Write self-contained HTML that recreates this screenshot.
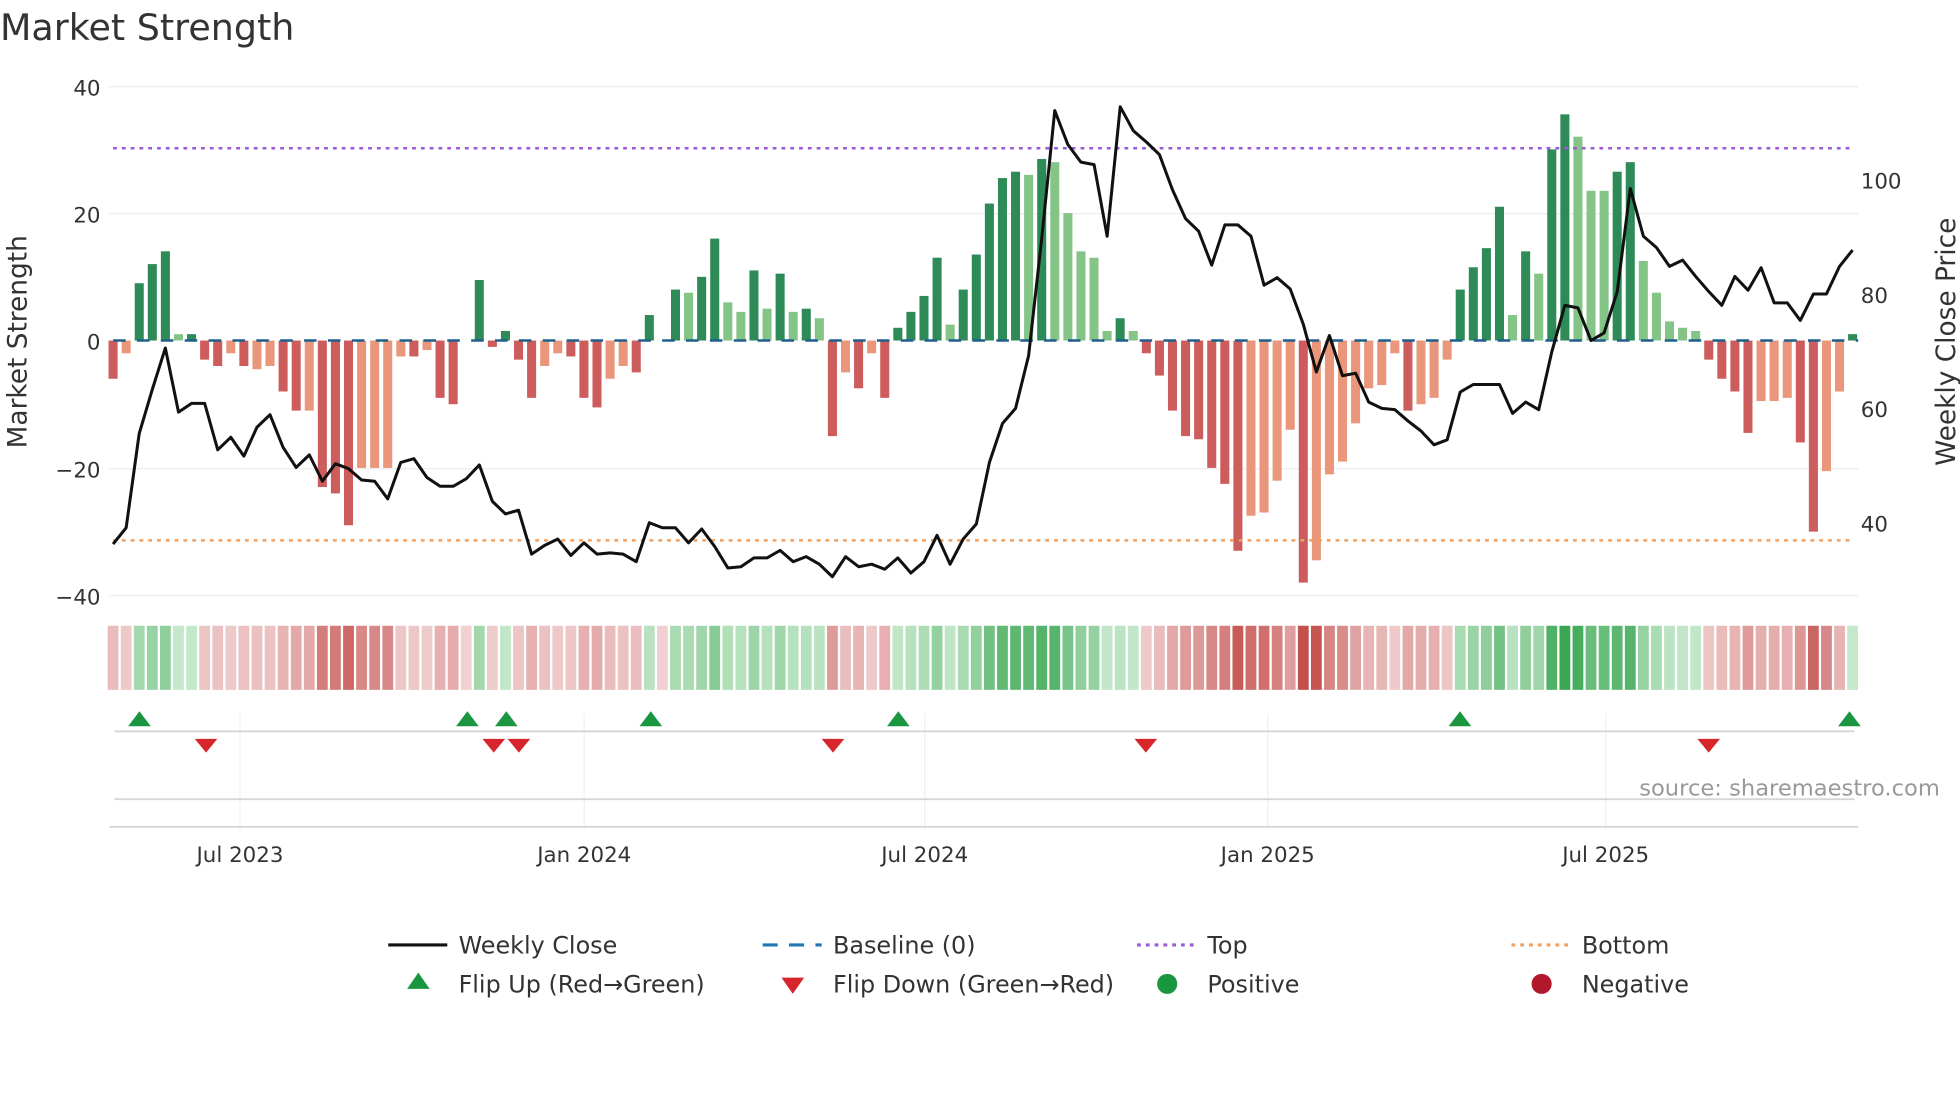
<!DOCTYPE html>
<html><head><meta charset="utf-8"><style>
html,body{margin:0;padding:0;background:#fff;width:1960px;height:1102px;overflow:hidden}
svg{display:block;font-family:"DejaVu Sans","Liberation Sans",sans-serif}
</style></head><body>
<svg id="s" width="1960" height="1102" viewBox="0 0 1560 877" preserveAspectRatio="none" xmlns="http://www.w3.org/2000/svg">
<text x="0" y="32" font-size="29" fill="#333">Market Strength</text>
<g stroke="#ececf2" stroke-width="1">
<line x1="87" y1="69" x2="1479" y2="69"/><line x1="87" y1="170" x2="1479" y2="170"/>
<line x1="87" y1="373" x2="1479" y2="373"/><line x1="87" y1="474" x2="1479" y2="474"/>
</g>
<g font-size="17" fill="#333" text-anchor="end">
<text x="80" y="76">40</text><text x="80" y="177">20</text><text x="80" y="278">0</text>
<text x="80" y="380">−20</text><text x="80" y="481">−40</text>
</g>
<g font-size="17" fill="#333">
<text x="1481" y="150">100</text><text x="1481" y="241">80</text><text x="1481" y="332">60</text><text x="1481" y="423">40</text>
</g>
<text transform="translate(21,272) rotate(-90)" font-size="21" fill="#333" text-anchor="middle">Market Strength</text>
<text transform="translate(1556,272) rotate(-90)" font-size="21" fill="#333" text-anchor="middle">Weekly Close Price</text>
<g id="bars"></g>
<line x1="90" y1="271" x2="1479" y2="271" stroke="#1f5f8b" stroke-width="2" stroke-dasharray="10,9"/>
<line x1="90" y1="118" x2="1476" y2="118" stroke="#9b59d9" stroke-width="2" stroke-dasharray="3,4"/>
<line x1="90" y1="430" x2="1476" y2="430" stroke="#f0a060" stroke-width="2" stroke-dasharray="3,4"/>
<polyline id="pl" fill="none" stroke="#111" stroke-width="2.4" stroke-linejoin="round"/>
<g id="heat"></g>
<g stroke="#f0f0f0" stroke-width="1">
<line x1="191" y1="568" x2="191" y2="660"/><line x1="465" y1="568" x2="465" y2="660"/>
<line x1="736" y1="568" x2="736" y2="660"/><line x1="1009" y1="568" x2="1009" y2="660"/>
<line x1="1278" y1="568" x2="1278" y2="660"/>
</g>
<line x1="91" y1="582" x2="1476" y2="582" stroke="#d6d6d6" stroke-width="1.5"/>
<line x1="91" y1="636" x2="1476" y2="636" stroke="#d6d6d6" stroke-width="1.5"/>
<line x1="87" y1="658" x2="1479" y2="658" stroke="#d6d6d6" stroke-width="1.5"/>
<g id="mk"></g>
<text x="1544" y="633" font-size="18" fill="#999" text-anchor="end">source: sharemaestro.com</text>
<g font-size="17" fill="#333" text-anchor="middle">
<text x="191" y="686">Jul 2023</text><text x="465" y="686">Jan 2024</text><text x="736" y="686">Jul 2024</text>
<text x="1009" y="686">Jan 2025</text><text x="1278" y="686">Jul 2025</text>
</g>
<g font-size="19" fill="#333">
<line x1="309" y1="752" x2="356" y2="752" stroke="#111" stroke-width="2.5"/><text x="365" y="759">Weekly Close</text>
<line x1="607" y1="752" x2="654" y2="752" stroke="#1f77b4" stroke-width="2.5" stroke-dasharray="12,9"/><text x="663" y="759">Baseline (0)</text>
<line x1="905" y1="752" x2="950" y2="752" stroke="#9b59d9" stroke-width="2.5" stroke-dasharray="3,4"/><text x="961" y="759">Top</text>
<line x1="1203" y1="752" x2="1248" y2="752" stroke="#f0a060" stroke-width="2.5" stroke-dasharray="3,4"/><text x="1259" y="759">Bottom</text>
<polygon points="333,774 342,787 324,787" fill="#1a9641"/><text x="365" y="790">Flip Up (Red→Green)</text>
<polygon points="622,778 640,778 631,791" fill="#d7262b"/><text x="663" y="790">Flip Down (Green→Red)</text>
<circle cx="929" cy="783" r="8" fill="#1a9641"/><text x="961" y="790">Positive</text>
<circle cx="1227" cy="783" r="8" fill="#b2182b"/><text x="1259" y="790">Negative</text>
</g>
</svg>
<script>
var v=[[-6,0],[-2,1],[9,0],[12,0],[14,0],[1,1],[1,0],[-3,0],[-4,0],[-2,1],[-4,0],[-4.5,1],[-4,1],[-8,0],[-11,0],[-11,1],[-23,0],[-24,0],[-29,0],[-20,1],[-20,1],[-20,1],[-2.5,1],[-2.5,0],[-1.5,1],[-9,0],[-10,0],[0,0],[9.5,0],[-1,0],[1.5,0],[-3,0],[-9,0],[-4,1],[-2,1],[-2.5,0],[-9,0],[-10.5,0],[-6,1],[-4,1],[-5,0],[4,0],[0,0],[8,0],[7.5,1],[10,0],[16,0],[6,1],[4.5,1],[11,0],[5,1],[10.5,0],[4.5,1],[5,0],[3.5,1],[-15,0],[-5,1],[-7.5,0],[-2,1],[-9,0],[2,0],[4.5,0],[7,0],[13,0],[2.5,1],[8,0],[13.5,0],[21.5,0],[25.5,0],[26.5,0],[26,1],[28.5,0],[28,1],[20,1],[14,1],[13,1],[1.5,1],[3.5,0],[1.5,1],[-2,0],[-5.5,0],[-11,0],[-15,0],[-15.5,0],[-20,0],[-22.5,0],[-33,0],[-27.5,1],[-27,1],[-22,1],[-14,1],[-38,0],[-34.5,1],[-21,1],[-19,1],[-13,1],[-7.5,1],[-7,1],[-2,1],[-11,0],[-10,1],[-9,1],[-3,1],[8,0],[11.5,0],[14.5,0],[21,0],[4,1],[14,0],[10.5,1],[30,0],[35.5,0],[32,1],[23.5,1],[23.5,1],[26.5,0],[28,0],[12.5,1],[7.5,1],[3,1],[2,1],[1.5,1],[-3,0],[-6,0],[-8,0],[-14.5,0],[-9.5,1],[-9.5,1],[-9,1],[-16,0],[-30,0],[-20.5,1],[-8,1],[1,0]];
var py=[433,420,345,310,277,328,321,321,358,348,363,340,330,356,372,362,383,369,373,382,383,397,368,365,380,387,387,381,370,399,409,406,441,434,429,442,432,441,440,441,447,416,420,420,432,421,435,452,451,444,444,438,447,443,449,459,443,451,449,453,444,456,447,426,449,429,417,368,337,325,283,190,88,115,129,131,188,85,104,113,123,151,174,184,211,179,179,188,227,221,230,258,296,267,299,297,320,325,326,335,343,354,350,312,306,306,306,329,320,326,280,243,245,271,265,232,150,188,197,212,207,220,232,243,220,231,213,241,241,255,234,234,212,199];
var NS="http://www.w3.org/2000/svg",bars=document.getElementById('bars'),heat=document.getElementById('heat'),h='',hh='',pts=[];
function mix(a,b,t){return 'rgb('+a.map(function(c,i){return Math.round(c+(b[i]-c)*t)}).join(',')+')'}
for(var i=0;i<v.length;i++){var x=90+i*10.41,val=v[i][0],lt=v[i][1];
 var y0=271,y1=271-val*5.07,c;
 if(val>0)c=lt?'#84c487':'#2e8b57';else c=lt?'#e9967a':'#cd5c5c';
 if(val!=0)h+='<rect x="'+(x-3.6)+'" y="'+Math.min(y0,y1)+'" width="7.2" height="'+Math.abs(y1-y0)+'" fill="'+c+'"/>';
 var t=Math.min(1,Math.abs(val)/36),hc=val>0?mix([200,234,205],[55,165,80],t):mix([240,208,208],[196,80,76],t);
 hh+='<rect x="'+(x-4.3)+'" y="498" width="8.6" height="51" fill="'+hc+'"/>';
 pts.push(x.toFixed(1)+','+py[i]);}
bars.innerHTML=h;heat.innerHTML=hh;document.getElementById('pl').setAttribute('points',pts.join(' '));
var m='';[111,372,403,518,715,1162,1472].forEach(function(x){m+='<polygon points="'+x+',566 '+(x+9)+',578 '+(x-9)+',578" fill="#1a9641"/>'});
[164,393,413,663,912,1360].forEach(function(x){m+='<polygon points="'+(x-9)+',588 '+(x+9)+',588 '+x+',599" fill="#d7262b"/>'});
document.getElementById('mk').innerHTML=m;
</script>
</body></html>
